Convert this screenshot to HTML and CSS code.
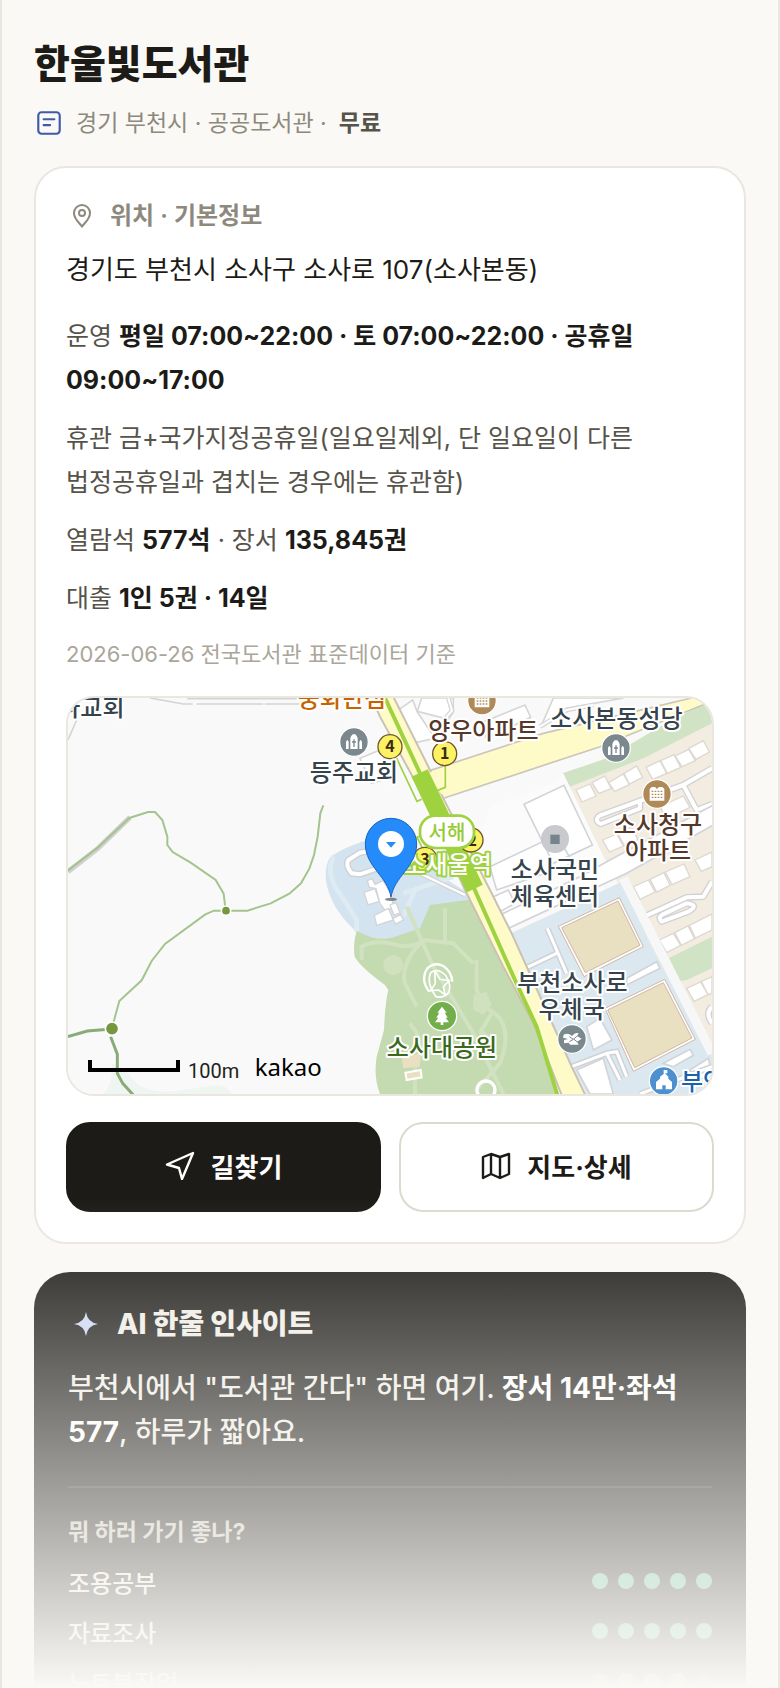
FILE: index.html
```
<!DOCTYPE html>
<html lang="ko">
<head>
    <meta charset="UTF-8">
    <meta name="viewport" content="width=device-width, initial-scale=1.0">
    <title>한울빛도서관</title>
    <link rel="stylesheet" href="styles.css">
</head>
<body>
    <main class="page">
        <header class="page-header">
            <h1>한울빛도서관</h1>
            <div class="meta">
                <svg class="meta-icon" viewBox="0 0 28 28" fill="none" stroke="#3f5aa9" stroke-width="2" stroke-linecap="round">
                    <rect x="4" y="4" width="20" height="20" rx="3"/>
                    <path d="M9 10.500h10M9 16h6"/>
                </svg>
                <span>경기 부천시 · 공공도서관 ·</span>
                <strong>무료</strong>
            </div>
        </header>

        <section class="card">
            <h2 class="card-title">
                <svg class="title-icon" viewBox="0 0 28 28" fill="none" stroke="#8d897c" stroke-width="2">
                    <path d="M14 24.500C11 20.500 6 17 6 11a8 8 0 0 1 16 0C22 17 17 20.500 14 24.500z"/>
                    <circle cx="14" cy="11" r="3"/>
                </svg>
                위치 · 기본정보
            </h2>
            <p class="address">경기도 부천시 소사구 소사로 107(소사본동)</p>
            <div class="facts">
                <p>운영 <b>평일 07:00~22:00 · 토 07:00~22:00 · 공휴일 09:00~17:00</b></p>
                <p>휴관 금+국가지정공휴일(일요일제외, 단 일요일이 다른 법정공휴일과 겹치는 경우에는 휴관함)</p>
                <p>열람석 <b>577석</b> · 장서 <b>135,845권</b></p>
                <p>대출 <b>1인 5권 · 14일</b></p>
            </div>
            <p class="source">2026-06-26 전국도서관 표준데이터 기준</p>

            <div class="map">
                <svg viewBox="24 24 1932 1188" preserveAspectRatio="xMidYMid slice" role="img" aria-label="한울빛도서관 지도">
                    <defs>
                        <g id="church">
                            <circle r="43" fill="#7b888e" stroke="#fff" stroke-width="4"/>
                            <path d="M-24 21V-1l4-6 4 6v22zM16 21V-1l4-6 4 6v22zM-11 21V-12Q-9-18-4-23h8Q9-18 11-12V21z" fill="#fff"/>
                            <path d="M0-8V15M-6 0H6" stroke="#7b888e" stroke-width="4"/>
                        </g>
                        <g id="apartment">
                            <circle r="43" fill="#af8a58" stroke="#fff" stroke-width="4"/>
                            <path d="M-22 20V-15l6-6h10l6 6 6-6H16l6 6V20z" fill="#fff"/>
                            <path d="M-16-8H17M-16 1H17M-16 10H17" stroke="#af8a58" stroke-width="4" stroke-dasharray="5 4"/>
                        </g>
                        <g id="exit">
                            <circle r="36" fill="#fdf263" stroke="#6d5530" stroke-width="4"/>
                        </g>
                    </defs>

                    <rect x="24" y="24" width="1932" height="1188" fill="#f9f9f9"/>

                    <!-- trails on the left -->
                    <path d="M130 1212Q160 1180 155 1120L205 1150Q240 1210 330 1205L440 1190Q500 1175 515 1212z" fill="#eff5f0"/>
                    <g fill="none">
                        <path d="M270 24L370 42H398M410 42H610M382 26H720M614 42H760M50 90L24 150" stroke="#d4d4d4" stroke-width="5"/>
                        <path d="M24 545L113 476 210 382" stroke="#d2d0d2" stroke-width="15"/>
                        <path d="M24 541L113 473 208 384 264 366H285L307 390 322 440V465L338 486 392 518 467 570 491 611 497 662H562L632 640 688 611 723 580 748 536 762 495 773 440 781 370 790 346M497 662H462L436 673 315 762 275 813 245 871 178 933 157 1010" stroke="#a4c48d" stroke-width="6"/>
                        <path d="M24 1040L82 1023 155 1017M152 1040L172 1093V1150L188 1180 220 1215" stroke="#8aab78" stroke-width="9"/>
                    </g>
                    <circle cx="498" cy="662" r="14" fill="#76973f" stroke="#fff" stroke-width="5"/>
                    <circle cx="156" cy="1016" r="20" fill="#76973f" stroke="#fff" stroke-width="5"/>

                    <!-- blocks north of the main road -->
                    <g fill="#fff" stroke="#d6d6d6" stroke-width="5">
                        <path d="M1012 62L1058 30 1072 66 1125 145 1046 162zM1085 24H1180V66L1165 88 1072 64z"/>
                        <path d="M1260 100L1395 45 1412 82 1280 145zM1445 105L1520 55 1690 24H1480z"/>
                        <path d="M900 205L960 180 1000 260 935 280z"/>
                    </g>
                    <path d="M1165 24L1176 62 1150 92M1285 200L1420 145M1440 110L1520 60 1600 45" fill="none" stroke="#d6d6d6" stroke-width="14"/>
                    <path d="M1165 24L1176 62 1150 92M1285 200L1420 145M1440 110L1520 60 1600 45" fill="none" stroke="#fff" stroke-width="6"/>

                    <!-- apartment blocks on the east side -->
                    <path d="M1510 290L1956 90V1120L1770 760 1640 515z" fill="#f2ece1"/>
                    <path d="M1507 250L1640 205 1800 110 1895 60 1956 20V100L1750 205 1525 292z" fill="#d0e3c4"/>
                    <g fill="#fff" stroke="#ddd8d0" stroke-width="4">
                        <path d="M1548 300L1590 282 1608 318 1566 336zM1596 278L1634 258 1654 296 1616 310zM1646 278L1690 252 1708 284 1664 304zM1692 250L1730 228 1748 262 1708 282z"/>
                        <path d="M1758 232L1800 212 1820 250 1778 268zM1802 212L1842 194 1862 232 1822 250zM1846 198L1886 178 1906 212 1866 230zM1886 175L1930 152 1948 186 1908 208z"/>
                        <path d="M1628 450L1670 432 1690 468 1648 486zM1674 432L1714 412 1734 448 1694 468zM1800 350L1870 318 1890 352 1820 386zM1720 590L1765 570 1785 606 1740 628zM1770 568L1812 548 1830 586 1790 606zM1816 546L1872 522 1890 560 1836 584z"/>
                        <path d="M1905 510L1956 486V530L1924 544zM1798 750L1840 730 1862 766 1820 788zM1844 728L1884 708 1904 746 1864 766zM1888 706L1956 672V720L1906 744zM1880 895L1922 876 1944 914 1902 934zM1924 874L1956 860V910L1944 914z"/>
                    </g>
                    <g fill="none" stroke-linejoin="round">
                        <path d="M1956 235L1870 285 1620 376Q1600 390 1622 402L1740 355V330M1870 285L1910 360 1956 342M1956 575L1930 620 1880 622 1730 690M1880 640L1815 670Q1790 680 1805 695L1885 665Q1920 645 1880 640M1956 950Q1935 970 1956 1000" stroke="#d2d2d4" stroke-width="20"/>
                        <path d="M1956 235L1870 285 1620 376Q1600 390 1622 402L1740 355V330M1870 285L1910 360 1956 342M1956 575L1930 620 1880 622 1730 690M1880 640L1815 670Q1790 680 1805 695L1885 665Q1920 645 1880 640M1956 950Q1935 970 1956 1000" stroke="#fff" stroke-width="12"/>
                    </g>
                    <path d="M1815 810L1956 740V835L1880 870 1845 875z" fill="#d0e3c4"/>

                    <!-- school and sports grounds -->
                    <path d="M1340 735L1590 620 1685 575 1770 760 1956 1100V1212H1580L1535 1125z" fill="#dbe8f0"/>
                    <path d="M1290 350L1480 280 1510 250 1640 520 1630 600 1320 680 1240 500z" fill="#fbfbfc"/>
                    <g fill="#fff" stroke="#d3d4d8" stroke-width="5">
                        <path d="M1392 343L1512 286 1597 465 1480 520zM1290 530L1490 435 1540 520 1310 600z"/>
                        <path d="M1320 675L1560 560 1640 515 1960 345V405L1700 550 1345 715z"/>
                        <path d="M1300 620L1345 600 1365 640 1320 665zM1550 1140L1630 1105 1660 1212H1590z"/>
                        <path d="M1700 865L1790 815 1800 835 1700 885zM1580 1010L1620 985 1656 1050 1600 1080zM1810 1120L1890 1078 1900 1096 1840 1130zM1890 1140L1945 1105 1956 1150 1900 1180z"/>
                    </g>
                    <path d="M1690 565L1956 1090" stroke="#f7f7f8" stroke-width="28" fill="none"/>
                    <g fill="none">
                        <path d="M1395 835L1490 790M1462 715L1520 850M1535 1130L1640 1090 1680 1170M1640 1090L1670 1085 1700 1160M1740 1212L1956 1130" stroke="#cfd2d6" stroke-width="18"/>
                        <path d="M1395 835L1490 790M1462 715L1520 850M1535 1130L1640 1090 1680 1170M1640 1090L1670 1085 1700 1160M1740 1212L1956 1130" stroke="#fff" stroke-width="9"/>
                    </g>
                    <g fill="#e9dfc1" stroke="#d0b7a5" stroke-width="3">
                        <path d="M1495 709L1678 623 1750 770 1572 860z" fill="#fff"/>
                        <path d="M1505 713L1674 633 1740 766 1576 848z"/>
                        <path d="M1635 955L1814 868 1906 1048 1720 1144z" fill="#fff"/>
                        <path d="M1643 960L1810 878 1896 1044 1724 1133z"/>
                    </g>

                    <!-- library grounds -->
                    <path d="M960 438Q850 470 810 502C780 550 800 650 895 730Q950 755 1010 740L1140 710 1240 625 1210 600 1130 550 1030 450z" fill="#d3e4f0"/>
                    <path d="M820 500Q800 540 825 590Q860 640 890 690L890 725M1030 680L1070 590M1030 610L1180 560" fill="none" stroke="#dfebf3" stroke-width="14"/>
                    <path d="M1000 470L900 488 865 510Q855 525 875 550L900 553 1010 515" fill="none" stroke="#cfd0d4" stroke-width="20"/>
                    <path d="M1000 470L900 488 865 510Q855 525 875 550L900 553 1010 515" fill="none" stroke="#fff" stroke-width="12"/>
                    <g fill="#fff" stroke="#d3d4d8" stroke-width="4">
                        <path d="M912 607L945 596 958 634 924 645zM922 572L936 566 945 583 970 572 985 600 1000 612 996 655 975 662 960 640 948 596 928 592z"/>
                        <path d="M943 676L985 655 1000 690 950 706zM990 645L1008 638 1020 668 1002 676zM998 686L1022 674 1030 690 1006 702z"/>
                    </g>

                    <!-- park -->
                    <path d="M890 722Q945 755 1000 742L1080 715 1110 645 1240 628 1330 830 1420 1000 1490 1212H960Q940 1160 950 1100L972 1020Q975 940 985 900L975 885Q900 830 884 800Q878 760 890 722z" fill="#c4dab0"/>
                    <path d="M905 810V770Q940 750 990 760 1060 780 1090 750L1180 760 1240 820M1040 650L1120 830 1240 1030 1330 1212M1090 750Q1020 820 1035 880L1070 950M1155 655V760M1050 1000Q1100 1060 1070 1130M1250 810V900L1270 950Q1370 990 1320 1120L1250 1200M1300 960L1260 1030M1065 1100V1212" fill="none" stroke="#d1e2c0" stroke-width="12"/>
                    <circle cx="1000" cy="825" r="30" fill="#d0e1bf"/>
                    <path d="M1240 915L1280 905 1295 945 1270 975 1240 960zM1260 1010L1290 1040 1255 1060z" fill="#d0e1bf"/>
                    <g fill="none" stroke="#fff" stroke-width="7">
                        <path d="M1108 905Q1080 870 1102 835 1125 815 1150 828 1175 845 1177 875"/>
                        <path d="M1128 920Q1098 880 1112 848 1135 832 1158 858 1175 885 1166 908 1150 926 1128 920z" stroke-width="5"/>
                        <path d="M1124 842L1140 868 1168 872 1150 890 1156 915 1136 900 1112 902 1126 880z" stroke-width="5"/>
                        <circle cx="1278" cy="1200" r="27" stroke-width="10"/>
                    </g>
                    <path d="M1025 1105L1080 1090V1130L1030 1135z" fill="#eadfc0"/>
                    <path d="M1036 1148L1082 1140 1085 1162 1040 1170z" fill="#eadfc0" stroke="#fff" stroke-width="6"/>

                    <!-- roads and the subway line -->
                    <path d="M1100 245L1450 130 1660 80 1895 24H1956L1945 38 1620 170 1150 325z" fill="#fffbc9" stroke="#cbc6ba" stroke-width="5"/>
                    <path d="M935 24L960 80 1085 310 1215 600 1330 830 1420 1000 1505 1215H1576L1535 1130 1355 730 1290 600 1150 325 1110 240 1000 20z" fill="#fffbc9" stroke="#cbc0b5" stroke-width="6"/>
                    <path d="M1113 246L1150 310" stroke="#fffbc9" stroke-width="14"/>
                    <path d="M1080 550L1215 615" stroke="#d0d0d2" stroke-width="14"/>
                    <path d="M1080 550L1215 615" stroke="#fff" stroke-width="7"/>
                    <g fill="none" stroke="#9fd23f">
                        <path d="M975 24L1080 250M1240 590L1365 870 1430 1010 1492 1215" stroke-width="12"/>
                        <path d="M1079 249L1244 596" stroke-width="54"/>
                        <path d="M1010 205L1071 334 1085 328M1156 225V292L1130 302M1060 445L1082 438M1070 440L1090 480" stroke-width="5"/>
                    </g>

                    <!-- places -->
                    <use href="#church" x="882" y="156"/>
                    <use href="#church" x="1668" y="174"/>
                    <use href="#apartment" x="1266" y="32"/>
                    <use href="#apartment" x="1791" y="312"/>
                    <circle cx="1485" cy="447" r="42" fill="#c9cace"/>
                    <rect x="1471" y="434" width="28" height="28" fill="#76858c"/>
                    <circle cx="1536" cy="1047" r="43" fill="#7b888e" stroke="#fff" stroke-width="4"/>
                    <path d="M1511 1034Q1524 1027 1536 1038 1545 1026 1556 1030L1551 1038 1565 1046 1551 1055 1556 1064H1530L1526 1058 1512 1060V1050L1524 1047 1509 1043z" fill="#fff"/>
                    <path d="M1528 1040L1540 1048 1528 1055M1552 1038L1541 1047 1552 1056" fill="none" stroke="#7b888e" stroke-width="3"/>
                    <circle cx="1146" cy="978" r="44" fill="#73ae4d" stroke="#fff" stroke-width="4"/>
                    <path d="M1146 950L1160 968H1154L1163 983H1157L1167 997H1150V1005H1142V997H1125L1135 983H1129L1138 968H1132z" fill="#fff"/>
                    <circle cx="1811" cy="1173" r="43" fill="#4c90d0" stroke="#fff" stroke-width="4"/>
                    <path d="M1788 1198V1176L1800 1166V1160L1811 1152V1140H1822V1150H1815L1825 1160V1166L1836 1176V1198H1817V1186H1807V1198z" fill="#fff"/>

                    <use href="#exit" x="990" y="170"/>
                    <use href="#exit" x="1154" y="191"/>
                    <use href="#exit" x="1233" y="450"/>
                    <use href="#exit" x="1095" y="508"/>
                    <g class="exit-no">
                        <text x="990" y="187">4</text>
                        <text x="1154" y="208">1</text>
                        <text x="1237" y="467">2</text>
                        <text x="1095" y="525">3</text>
                    </g>

                    <g class="label">
                        <text x="94" y="77">나교회</text>
                        <text x="882" y="272">등주교회</text>
                        <text x="1669" y="111">소사본동성당</text>
                        <text x="1485" y="565">소사국민</text>
                        <text x="1485" y="645">체육센터</text>
                        <text x="1537" y="904">부천소사로</text>
                        <text x="1535" y="985">우체국</text>
                        <text class="food" x="846" y="51">중화반점</text>
                        <text class="home" x="1270" y="147">양우아파트</text>
                        <text class="home" x="1794" y="429">소사청구</text>
                        <text class="home" x="1794" y="507">아파트</text>
                        <text class="park" x="1146" y="1097">소사대공원</text>
                        <text class="school" x="1962" y="1201">부안초</text>
                        <text class="station" x="1163" y="550">소새울역</text>
                    </g>
                    <rect x="1080" y="377" width="162" height="97" rx="46" fill="#fff" stroke="#9fd23f" stroke-width="8"/>
                    <text class="line-name" x="1161" y="449">서해</text>

                    <!-- marker -->
                    <ellipse cx="993" cy="628" rx="18" ry="5" fill="#555" opacity=".7"/>
                    <path d="M993 622C984 560 916 530 916 462a77 77 0 0 1 154 0C1070 530 1002 560 993 622z" fill="#258bfa" stroke="#1864c4" stroke-width="3"/>
                    <circle cx="993" cy="462" r="39" fill="#fff"/>
                    <path d="M978 456H1008L993 473z" fill="#258bfa"/>

                    <path d="M90 1110V1140H354V1110" fill="none" stroke="#000" stroke-width="12"/>
                    <text class="scale" x="384" y="1164">100m</text>
                    <text class="brand" x="584" y="1157">kakao</text>
                </svg>
            </div>

            <div class="actions">
                <button type="button" class="btn btn-dark">
                    <svg viewBox="0 0 30 30" fill="none" stroke="currentColor" stroke-width="2.400" stroke-linejoin="round">
                        <path d="M28 3L2 14.500l12 3.500 3 11z"/>
                    </svg>
                    길찾기
                </button>
                <button type="button" class="btn">
                    <svg viewBox="0 0 30 30" fill="none" stroke="currentColor" stroke-width="2.400" stroke-linejoin="round">
                        <path d="M2 7l8-3 9 3 9-3v20l-9 4-9-4-8 4zM10 4v20M19 7v21"/>
                    </svg>
                    지도·상세
                </button>
            </div>
        </section>

        <section class="insight">
            <h2 class="insight-title">
                <svg viewBox="0 0 30 30" fill="#ccd7f5">
                    <path d="M15 3Q16.500 13.500 27 15Q16.500 16.500 15 27Q13.500 16.500 3 15Q13.500 13.500 15 3z"/>
                </svg>
                AI 한줄 인사이트
            </h2>
            <p class="insight-text">부천시에서 "도서관 간다" 하면 여기. <b>장서 14만·좌석 577</b>, 하루가 짧아요.</p>
            <h3 class="insight-question">뭐 하러 가기 좋나?</h3>
            <ul class="ratings">
                <li>조용공부 <span class="dots"><i></i><i></i><i></i><i></i><i></i></span></li>
                <li>자료조사 <span class="dots"><i></i><i></i><i></i><i></i><i></i></span></li>
                <li>노트북작업 <span class="dots"><i></i><i></i><i></i><i></i><i class="off"></i></span></li>
            </ul>
        </section>
        <div class="fade"></div>
    </main>
</body>
</html>
```
FILE: styles.css
```
* {
    margin: 0;
    padding: 0;
    box-sizing: border-box;
}

body {
    background: #faf9f5;
    color: #1c1b17;
    font-family: Inter, "Noto Sans CJK KR", sans-serif;
    font-size: 24px;
    word-break: keep-all;
}

/* Preview of the page, cut off by the fade at the bottom */
.page {
    position: relative;
    height: 100vh;
    padding: 34px 32px 0;
    border: solid #e9e7e0;
    border-width: 0 2px;
    overflow: hidden;
}

.page-header {
    margin-bottom: 24px;
}

h1 {
    font-size: 39px;
    font-weight: 800;
    line-height: 60px;
}

.meta {
    display: flex;
    align-items: center;
    gap: 12px;
    margin-top: 10px;
    line-height: 38px;
    font-size: 23px;
    color: #8d897c;
}

.meta strong {
    font-weight: 600;
    color: #56534a;
}

.meta-icon {
    width: 30px;
    height: 30px;
}

/* Location card */
.card {
    padding: 30px;
    border: 2px solid #e9e7e0;
    border-radius: 32px;
    background: #fff;
}

.card-title {
    display: flex;
    align-items: center;
    gap: 14px;
    padding-left: 2px;
    font-size: 24px;
    font-weight: 600;
    line-height: 36px;
    color: #8d897c;
}

.title-icon {
    width: 28px;
    height: 28px;
}

.address {
    margin-top: 14px;
    font-size: 26px;
    font-weight: 400;
    line-height: 44px;
}

.facts {
    display: flex;
    flex-direction: column;
    gap: 14px;
    margin-top: 22px;
    font-size: 25px;
    line-height: 44px;
    color: #56534a;
}

.facts b {
    font-weight: 700;
    color: #1c1b17;
}

.source {
    margin-top: 16px;
    font-size: 22px;
    line-height: 36px;
    color: #aaa69a;
}

.map {
    margin-top: 24px;
    border: 2px solid #e9e7e0;
    border-radius: 28px;
    overflow: hidden;
}

.map svg {
    display: block;
    width: 100%;
}

/* Map text: three drawing units make one pixel */
.map text {
    font-family: "Noto Sans CJK KR", sans-serif;
    font-weight: 500;
}

.label text {
    font-size: 72px;
    text-anchor: middle;
    fill: #34434c;
    stroke: #fff;
    stroke-width: 12px;
    stroke-linejoin: round;
    paint-order: stroke;
}

.label .food {
    fill: #c86400;
}

.label .home {
    fill: #55382a;
}

.label .park {
    fill: #3c6a1c;
}

.label .school {
    fill: #1a62b0;
}

.label .station {
    fill: #fff;
    stroke: #9fd23f;
}

.exit-no text {
    font-size: 48px;
    font-weight: 700;
    text-anchor: middle;
    fill: #3a2a18;
}

.map .line-name {
    font-size: 60px;
    text-anchor: middle;
    fill: #96cb35;
}

.map .scale {
    font-family: Roboto, sans-serif;
    font-size: 60px;
    font-weight: 400;
    fill: #222;
}

.map .brand {
    font-family: "Noto Sans", sans-serif;
    font-size: 72px;
    font-weight: 400;
}

.actions {
    display: grid;
    grid-template-columns: 1fr 1fr;
    gap: 18px;
    margin-top: 26px;
}

.btn {
    display: flex;
    align-items: center;
    justify-content: center;
    gap: 16px;
    height: 90px;
    padding-bottom: 4px;
    border: 2px solid #dcdacf;
    border-radius: 24px;
    background: #fff;
    color: #1c1b17;
    font-family: inherit;
    font-size: 26px;
    font-weight: 700;
    cursor: pointer;
}

.btn svg {
    width: 30px;
    height: 30px;
}

.btn-dark {
    border-color: #1c1b17;
    background: #1c1b17;
    color: #fff;
}

/* AI insight */
.insight {
    margin-top: 28px;
    padding: 32px 34px;
    border-radius: 36px;
    background: #1c1b17;
    color: #f0eee6;
}

.insight-title {
    display: flex;
    align-items: center;
    gap: 16px;
    padding-left: 3px;
    font-size: 28px;
    font-weight: 800;
    line-height: 40px;
}

.insight-title svg {
    width: 30px;
    height: 30px;
}

.insight-text {
    margin-top: 22px;
    padding-bottom: 32px;
    border-bottom: 2px solid rgba(255, 255, 255, 0.1);
    font-size: 28px;
    font-weight: 500;
    line-height: 44px;
}

.insight-text b {
    font-weight: 700;
    color: #fff;
}

.insight-question {
    margin-top: 26px;
    font-size: 23px;
    font-weight: 700;
    line-height: 36px;
    color: #c9c5b8;
}

.ratings {
    margin-top: 6px;
    list-style: none;
    font-weight: 500;
}

.ratings li {
    display: flex;
    align-items: center;
    justify-content: space-between;
    height: 50px;
}

.dots {
    display: flex;
    gap: 10px;
}

.dots i {
    width: 16px;
    height: 16px;
    border-radius: 50%;
    background: #5cb894;
}

.dots .off {
    background: #45443e;
}

.fade {
    position: absolute;
    right: 0;
    bottom: 0;
    left: 0;
    height: 490px;
    background: linear-gradient(rgba(250, 249, 245, 0), #faf9f5);
    pointer-events: none;
}
```
